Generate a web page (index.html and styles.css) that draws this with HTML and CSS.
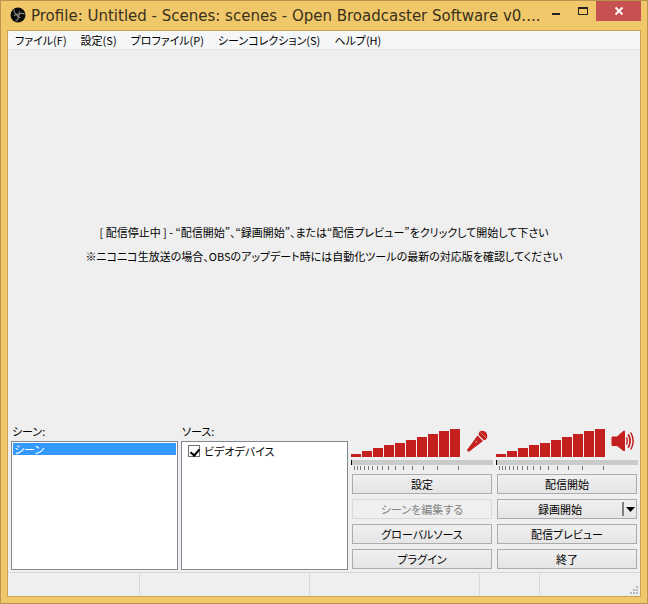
FILE: index.html
```html
<!DOCTYPE html>
<html lang="ja">
<head>
<meta charset="utf-8">
<meta name="viewport" content="width=device-width, initial-scale=1">
<title>Open Broadcaster Software</title>
<link rel="stylesheet" href="styles.css">
</head>
<body>
<div class="window">
  <header class="titlebar">
    <svg class="app-icon" width="16" height="16" viewBox="0 0 16 16" aria-hidden="true">
      <circle cx="8" cy="8" r="7.5" fill="#0c0b0b"/>
      <g fill="none" stroke="#a39e94" stroke-width="1" stroke-linecap="round">
        <path d="M4 3.2C3.8 5.7 5.4 7.4 7.6 7.2C9 7 9.7 6 9.4 4.7"/>
        <path d="M4 3.2C3.8 5.7 5.4 7.4 7.6 7.2C9 7 9.7 6 9.4 4.7" transform="rotate(120 8 8)"/>
        <path d="M4 3.2C3.8 5.7 5.4 7.4 7.6 7.2C9 7 9.7 6 9.4 4.7" transform="rotate(240 8 8)"/>
      </g>
    </svg>
    <h1 class="title">Profile: Untitled - Scenes: scenes - Open Broadcaster Software v0....</h1>
    <div class="window-buttons">
      <button class="window-button" type="button" aria-label="最小化"><svg width="10" height="10" viewBox="0 0 10 10"><path d="M1 7h8v2H1z" fill="#222"/></svg></button>
      <button class="window-button" type="button" aria-label="最大化"><svg width="10" height="10" viewBox="0 0 10 10"><path d="M0 1h10v8H0zM1 3v5h8V3z" fill="#222" fill-rule="evenodd"/></svg></button>
      <button class="window-button close" type="button" aria-label="閉じる"><svg width="10" height="10" viewBox="0 0 10 10"><path d="M1.5 1.5l7 7M8.500 1.500l-7 7" stroke="#fff" stroke-width="1.8"/></svg></button>
    </div>
  </header>

  <div class="client">
    <nav class="menu">
      <button type="button">ファイル(F)</button>
      <button type="button">設定(S)</button>
      <button type="button">プロファイル(P)</button>
      <button type="button">シーンコレクション(S)</button>
      <button type="button">ヘルプ(H)</button>
    </nav>

    <main class="preview">
      <p>[ 配信停止中 ] - “配信開始”、“録画開始”、または“配信プレビュー”をクリックして開始して下さい</p>
      <p>※ニコニコ生放送の場合、OBSのアップデート時には自動化ツールの最新の対応版を確認してください</p>
    </main>

    <section class="panel">
      <div class="list-group">
        <h2 id="scenes-label">シーン:</h2>
        <ul class="list" role="listbox" aria-labelledby="scenes-label">
          <li class="scene selected" role="option" aria-selected="true">シーン</li>
        </ul>
      </div>
      <div class="list-group">
        <h2>ソース:</h2>
        <ul class="list">
          <li><label class="source"><input type="checkbox" checked>ビデオデバイス</label></li>
        </ul>
      </div>

      <div class="controls">
        <div class="volume">
          <svg width="109" height="28" viewBox="0 0 109 28" role="img" aria-label="マイク音量">
            <path fill="#c42020" d="M0 25h10v3H0zM11 22h10v6H11zM22 19h10v9H22zM33 16h10v12H33zM44 14h10v14H44zM55 11h10v17H55zM66 8h10v20H66zM77 5h10v23H77zM88 2h10v26H88zM99 0h10v28H99z"/>
          </svg>
          <svg width="24" height="24" viewBox="0 0 24 24" aria-hidden="true">
            <g fill="#c42020">
              <path d="M11.500 6.500L17 12L5.300 21L3.300 22.800Q1 22.800 1 20.700L2.800 18.500z"/>
              <path d="M12.600 6C12.200 2 16.400 .6 19.600 3C22.500 5.700 21.500 11 17.800 11.200z"/>
            </g>
            <path d="M12 6L17.700 11.700" stroke="#efefef" stroke-width=".8"/>
            <path d="M14.500 3.500L20 9" stroke="#e6a0a0" stroke-width=".7"/>
            <path d="M9.500 13.500l1.500-1.500" stroke="#efc4c4" stroke-width="1"/>
          </svg>
        </div>
        <div class="level"></div>
        <svg class="ticks" width="109" height="4" viewBox="0 0 109 4" aria-hidden="true">
          <path fill="#777" d="M3 0h1v4H3zM6 0h1v4H6zM9 0h1v4H9zM13 0h1v4h-1zM17 0h1v4h-1zM21 0h1v4h-1zM26 0h1v4h-1zM31 0h1v4h-1zM37 0h1v4h-1zM44 0h1v4h-1zM52 0h1v4h-1zM61 0h1v4h-1zM72 0h1v4h-1zM86 0h1v4h-1zM107 0h1v4h-1z"/>
        </svg>
        <div class="actions">
          <button type="button">設定</button>
          <button type="button" disabled>シーンを編集する</button>
          <button type="button">グローバルソース</button>
          <button type="button">プラグイン</button>
        </div>
      </div>

      <div class="controls">
        <div class="volume">
          <svg width="109" height="28" viewBox="0 0 109 28" role="img" aria-label="スピーカー音量">
            <path fill="#c42020" d="M0 25h10v3H0zM11 22h10v6H11zM22 19h10v9H22zM33 16h10v12H33zM44 14h10v14H44zM55 11h10v17H55zM66 8h10v20H66zM77 5h10v23H77zM88 2h10v26H88zM99 0h10v28H99z"/>
          </svg>
          <svg width="24" height="24" viewBox="0 0 24 24" aria-hidden="true">
            <path fill="#c42020" d="M.5 8.500Q.5 7.500 1.500 7.500H6L12.500 1.800Q14 1 14 2.700V21.300Q14 23 12.500 22L6 17H1.500Q.5 17 .5 16z"/>
            <g fill="none" stroke="#c42020" stroke-linecap="round">
              <path d="M15.700 9Q17 12 15.700 15" stroke-width="1.500"/>
              <path d="M17.500 6Q20.700 12 17.500 18" stroke-width="1.800"/>
              <path d="M20 4Q24.300 12 20 20" stroke-width="1.500"/>
            </g>
          </svg>
        </div>
        <div class="level"></div>
        <svg class="ticks" width="109" height="4" viewBox="0 0 109 4" aria-hidden="true">
          <path fill="#777" d="M3 0h1v4H3zM6 0h1v4H6zM9 0h1v4H9zM13 0h1v4h-1zM17 0h1v4h-1zM21 0h1v4h-1zM26 0h1v4h-1zM31 0h1v4h-1zM37 0h1v4h-1zM44 0h1v4h-1zM52 0h1v4h-1zM61 0h1v4h-1zM72 0h1v4h-1zM86 0h1v4h-1zM107 0h1v4h-1z"/>
        </svg>
        <div class="actions">
          <button type="button">配信開始</button>
          <div class="split">
            <button class="split-main" type="button">録画開始</button>
            <button class="split-more" type="button" aria-label="録画メニュー"><svg width="9" height="5" viewBox="0 0 9 5"><path d="M0 0h9L4.500 5z" fill="#000"/></svg></button>
          </div>
          <button type="button">配信プレビュー</button>
          <button type="button">終了</button>
        </div>
      </div>
    </section>

    <footer class="status">
      <span></span><span></span><span></span><span></span>
      <svg class="grip" width="8" height="8" viewBox="0 0 8 8" aria-hidden="true">
        <path fill="#b8b8b8" d="M6 0h2v2H6zM3 3h2v2H3zM6 3h2v2H6zM0 6h2v2H0zM3 6h2v2H3zM6 6h2v2H6z"/>
      </svg>
    </footer>
  </div>
</div>
</body>
</html>
```
FILE: styles.css
```css
* {
  box-sizing: border-box;
}

body {
  margin: 0;
  color: #000;
  font: 11px/16px "Noto Sans CJK JP", sans-serif;
  font-feature-settings: "palt";
}

button {
  margin: 0;
  padding: 0;
  border: 0;
  background: none;
  color: inherit;
  font: inherit;
  font-feature-settings: inherit;
}

svg {
  display: block;
  flex: none;
}

h1, h2, p, ul {
  margin: 0;
  padding: 0;
  font-size: inherit;
  font-weight: normal;
  list-style: none;
}

.window {
  display: flex;
  flex-direction: column;
  min-height: 100vh;
  padding: 0 6px 6px;
  border: 1px solid #b8964e;
  background: #f0c869;
}

.titlebar {
  display: flex;
  height: 29px;
  padding-left: 3px;
}

.app-icon {
  margin: 6px 5px 0 0;
}

.title {
  flex: 1;
  min-width: 0;
  overflow: hidden;
  color: #3a311d;
  font: 15px/30px "DejaVu Sans", sans-serif;
  white-space: nowrap;
}

.window-buttons {
  display: flex;
  height: 20px;
}

.window-button {
  display: grid;
  place-items: center;
  width: 27px;
}

.window-button.close {
  width: 45px;
  background: #c75050;
}

.client {
  display: flex;
  flex: 1;
  flex-direction: column;
  border: 1px solid #c9a350;
  background: #efefef;
}

.menu {
  display: flex;
  gap: 14px;
  height: 19px;
  padding-left: 7px;
  border-bottom: 1px solid #e6e6e6;
  background: #f5f6f7;
}

.preview {
  display: flex;
  flex: 1;
  flex-direction: column;
  align-items: center;
  justify-content: center;
  gap: 8px;
  padding-top: 14px;
  text-align: center;
}

.panel {
  display: grid;
  grid-template-columns: 167fr 167fr 142fr 142fr;
  gap: 3px;
  padding: 0 2px 2px 3px;
}

.list-group {
  display: flex;
  flex-direction: column;
  gap: 2px;
}

.list-group h2 {
  padding-left: 1px;
}

.list {
  flex: 1;
  padding: 1px;
  border: 1px solid #828790;
  background: #fff;
}

.scene {
  height: 12px;
  padding-left: 1px;
  line-height: 12px;
}

.scene.selected {
  background: #3399ff;
  color: #fff;
}

.source {
  display: flex;
  align-items: center;
  gap: 4px;
  padding-left: 5px;
}

.source input {
  appearance: none;
  width: 12px;
  height: 12px;
  margin: 0;
  border: 1px solid #707070;
  background: #fff;
}

.source input:checked::before {
  display: block;
  width: 4px;
  height: 7px;
  margin: 1px 0 0 3px;
  border: solid #000;
  border-width: 0 2px 2px 0;
  content: "";
  transform: rotate(40deg);
}

.controls {
  display: flex;
  flex-direction: column;
  padding-top: 6px;
}

.volume {
  display: flex;
  gap: 6px;
}

.level {
  height: 5px;
  margin: 3px 0 1px;
  border-left: 1px solid #000;
  background: #cacaca;
}

.actions {
  display: grid;
  grid-auto-rows: 20px;
  gap: 5px;
  padding: 4px 1px 1px;
}

.actions > button,
.split {
  border: 1px solid #acacac;
  background: linear-gradient(#f0f0f0, #e5e5e5);
}

.actions > button:disabled {
  border-color: #d9d9d9;
  background: #efefef;
  color: #838383;
}

.split {
  display: flex;
}

.split-main {
  flex: 1;
}

.split-more {
  display: grid;
  place-items: center;
  width: 14px;
  margin: 2px 0;
  border-left: 2px solid #808080;
}

.status {
  display: grid;
  grid-template-columns: 132fr 170fr 170fr 60fr 100fr;
  height: 24px;
  border-top: 1px solid #d7d7d7;
}

.status span {
  margin: 1px 0;
  border-right: 1px solid #d7d7d7;
}

.grip {
  align-self: end;
  justify-self: end;
  margin: 0 2px 2px 0;
}
```
